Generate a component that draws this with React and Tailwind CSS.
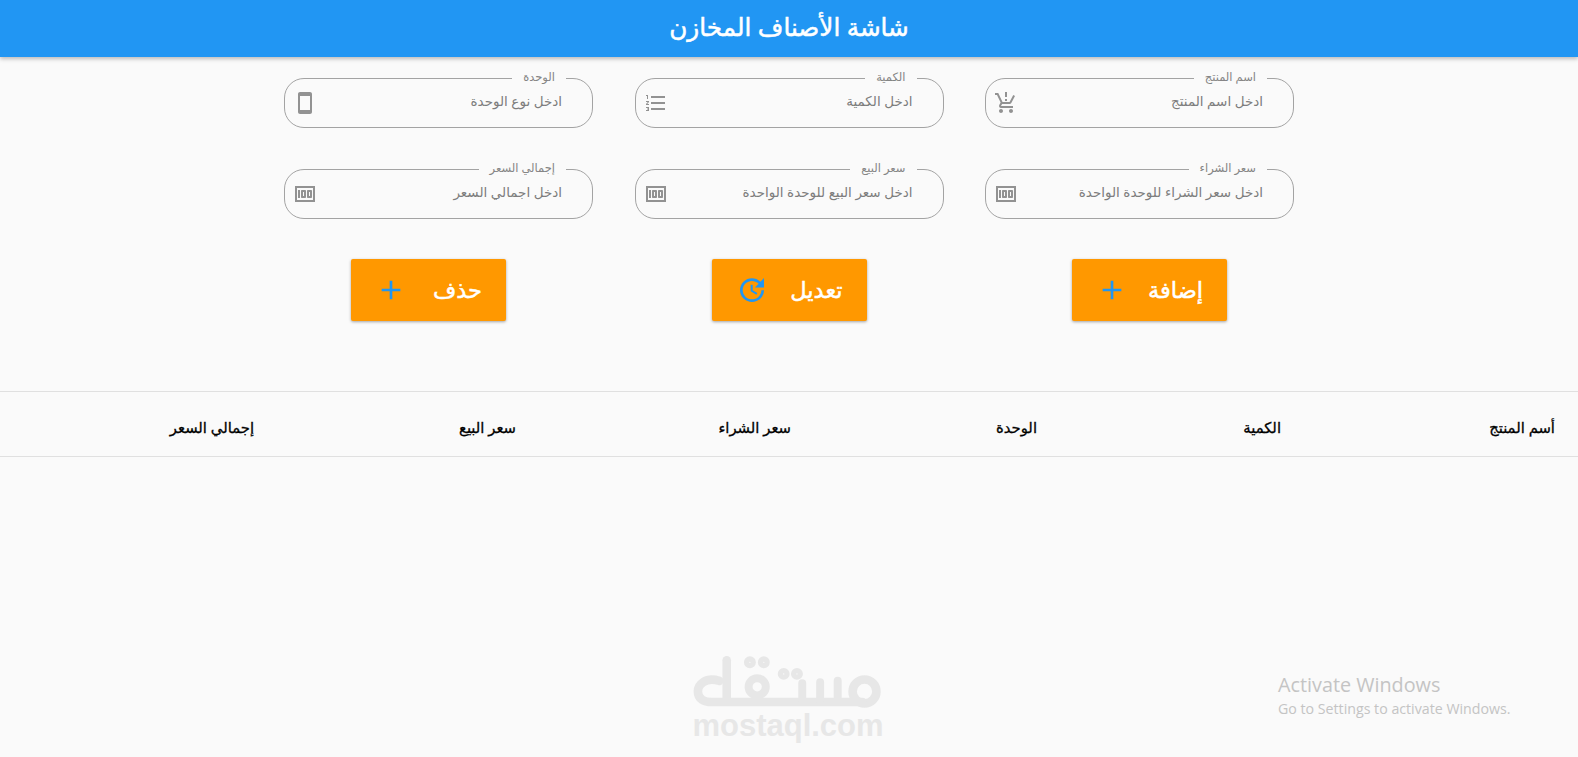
import React from "react";
import { MdMoney, MdProductionQuantityLimits, MdFormatListNumbered, MdSmartphone, MdAdd, MdUpdate } from "react-icons/md";

const font = "font-['Noto_Sans','DejaVu_Sans',sans-serif]";

const fields = [
  { label: "اسم المنتج", hint: "ادخل اسم المنتج", Icon: MdProductionQuantityLimits },
  { label: "الكمية", hint: "ادخل الكمية", Icon: MdFormatListNumbered },
  { label: "الوحدة", hint: "ادخل نوع الوحدة", Icon: MdSmartphone },
  { label: "سعر الشراء", hint: "ادخل سعر الشراء للوحدة الواحدة", Icon: MdMoney },
  { label: "سعر البيع", hint: "ادخل سعر البيع للوحدة الواحدة", Icon: MdMoney },
  { label: "إجمالي السعر", hint: "ادخل اجمالي السعر", Icon: MdMoney },
];

const buttons = [
  { label: "إضافة", Icon: MdAdd },
  { label: "تعديل", Icon: MdUpdate },
  { label: "حذف", Icon: MdAdd },
];

const columns = ["أسم المنتج", "الكمية", "الوحدة", "سعر الشراء", "سعر البيع", "إجمالي السعر"];

function Field({ label, hint, Icon }) {
  return (
    <div className="relative flex h-[50px] items-center justify-between rounded-[20px] border border-[#a3a3a3] pr-[30px] pl-2">
      <span className="absolute -top-[10px] right-[26px] bg-[#fafafa] px-[11px] text-[11.5px] leading-[16px] text-[#858585]">{label}</span>
      <span className="pb-[3px] text-[13.5px] text-[#7d7d7d]">{hint}</span>
      <Icon className="text-[24px] text-[#929292]" />
    </div>
  );
}

function ActionButton({ label, Icon }) {
  return (
    <button className="flex h-[62px] w-[155px] items-center justify-between rounded-[2px] bg-[#ff9800] px-[24px] text-[22.5px] text-white shadow-[0_1px_3px_rgba(0,0,0,0.35)] [-webkit-text-stroke:0.5px_white]">
      <span>{label}</span>
      <Icon className="text-[32px] text-[#2196f3]" />
    </button>
  );
}

export default function App() {
  return (
    <div dir="rtl" className={`relative h-[757px] overflow-hidden bg-[#fafafa] ${font}`}>
      <header className="flex h-[57px] items-center justify-center bg-[#2196f3] pb-[3px] text-[24.7px] text-white shadow-[0_2px_4px_rgba(0,0,0,0.25)] [-webkit-text-stroke:0.5px_white]">
        شاشة الأصناف المخازن
      </header>

      <section className="mx-auto mt-[21px] grid w-[1010px] grid-cols-3 gap-x-[41.5px] gap-y-[41px]">
        {fields.map((f) => (
          <Field key={f.label} {...f} />
        ))}
      </section>

      <section className="mx-auto mt-[40px] flex w-[876px] justify-between">
        {buttons.map((b) => (
          <ActionButton key={b.label} {...b} />
        ))}
      </section>

      <section className="mt-[70px] grid h-[66px] grid-cols-[274px_244px_246px_275px_262px_1fr] items-center border-y border-[#e0e0e0] pt-[6px] pr-[23px] text-[14.8px] text-black [-webkit-text-stroke:0.3px_black]">
        {columns.map((c) => (
          <span key={c}>{c}</span>
        ))}
      </section>

      <div dir="ltr" className="absolute left-[693px] top-[655px] flex w-[190px] flex-col items-center">
        <svg width="190" height="53" viewBox="100 40 570 160" fill="none" stroke="#e7e7e7" strokeWidth="26" strokeLinecap="round">
          <circle cx="616" cy="150" r="36" />
          <path d="M200 56V170" />
          <path d="M178 118C135 105 113 130 113 150C113 172 130 182 155 182H610" />
          <path d="M535 118V175M482 122V175M428 125V175" strokeWidth="24" />
          <circle cx="292" cy="136" r="26" strokeWidth="24" />
          <circle cx="270" cy="62" r="8" strokeWidth="20" />
          <circle cx="312" cy="62" r="8" strokeWidth="20" />
          <circle cx="372" cy="97" r="8" strokeWidth="20" />
          <circle cx="412" cy="97" r="8" strokeWidth="20" />
        </svg>
        <span className="mt-[4px] font-['Liberation_Sans',sans-serif] text-[31px] font-bold leading-[28px] text-[#e7e7e7]">mostaql.com</span>
      </div>

      <div dir="ltr" className="absolute left-[1278px] top-[671px] font-['Open_Sans',sans-serif] text-[#c4c4c4]">
        <div className="text-[19.8px] leading-[28px]">Activate Windows</div>
        <div className="text-[14.2px] leading-[20px]">Go to Settings to activate Windows.</div>
      </div>
    </div>
  );
}
